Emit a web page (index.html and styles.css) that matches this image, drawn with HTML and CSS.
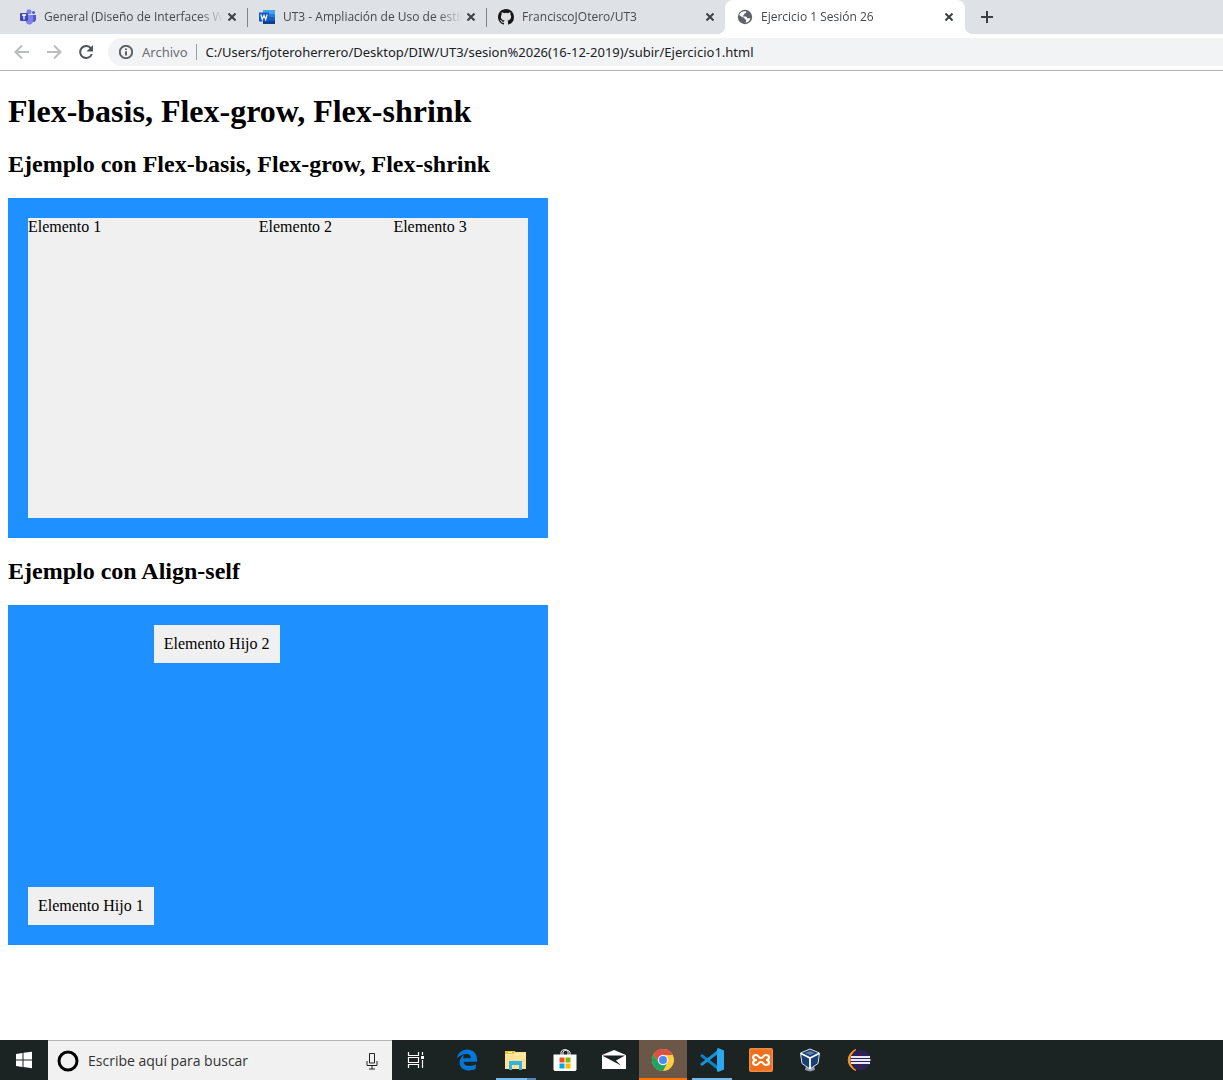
FILE: index.html
```html
<!DOCTYPE html>
<html lang="es">
<head>
<meta charset="utf-8">
<title>Ejercicio 1 Sesión 26</title>
<link rel="stylesheet" href="styles.css">
</head>
<body>
<header class="browser">
  <nav class="tabs" aria-label="Pestañas">
    <div class="tab">
      <svg class="favicon" viewBox="0 0 16 16"><circle cx="9" cy="2.700" r="2.500" fill="#7b83eb"/><circle cx="13.500" cy="3.600" r="1.500" fill="#5059c9"/><path d="M12 6h4v4.500a2.500 2.500 0 0 1-4 2z" fill="#5059c9"/><path d="M6 6h7v6a3.700 3.700 0 0 1-7 1.500z" fill="#7b83eb"/><rect y="4" width="8" height="8" rx="1" fill="#4049b5"/><path d="M2 6h4M4 6v4.500" stroke="#fff" stroke-width="1.300"/></svg>
      <a class="tab-title" href="#general">General (Diseño de Interfaces We</a>
      <button class="close" aria-label="Cerrar"><svg viewBox="0 0 8 8"><path d="M0.500 0.500l7 7M7.500 0.500l-7 7"/></svg></button>
    </div>
    <div class="tab tab-divided">
      <svg class="favicon" viewBox="0 0 16 16"><path d="M4 1h12v4H4z" fill="#41a5ee"/><path d="M4 5h12v3H4z" fill="#2b7cd3"/><path d="M4 8h12v4H4z" fill="#185abd"/><path d="M4 12h12v3H4z" fill="#103f91"/><rect y="3.500" width="10" height="9" fill="#185abd"/><path d="M1.800 5.500l1.500 5L5 6.300l1.700 4.200 1.500-5" fill="none" stroke="#fff" stroke-width="1.200"/></svg>
      <a class="tab-title" href="#ut3">UT3 - Ampliación de Uso de estil</a>
      <button class="close" aria-label="Cerrar"><svg viewBox="0 0 8 8"><path d="M0.500 0.500l7 7M7.500 0.500l-7 7"/></svg></button>
    </div>
    <div class="tab tab-divided">
      <svg class="favicon" viewBox="0 0 16 16"><path fill="#191717" d="M8 0C3.580 0 0 3.580 0 8c0 3.540 2.290 6.530 5.470 7.590.4.070.55-.17.55-.38 0-.19-.01-.82-.01-1.490-2.010.37-2.530-.49-2.690-.94-.09-.23-.48-.94-.82-1.130-.28-.15-.68-.52-.01-.53.63-.01 1.080.58 1.230.82.72 1.210 1.870.87 2.330.66.07-.52.28-.87.51-1.070-1.780-.2-3.640-.89-3.640-3.950 0-.87.31-1.590.82-2.150-.08-.2-.36-1.020.08-2.120 0 0 .67-.21 2.200.82a7.600 7.600 0 0 1 4 0c1.530-1.040 2.200-.82 2.200-.82.44 1.100.16 1.920.08 2.120.51.56.82 1.270.82 2.150 0 3.070-1.870 3.750-3.650 3.950.29.25.54.73.54 1.480 0 1.070-.01 1.930-.01 2.200 0 .21.15.46.55.38A8 8 0 0 0 16 8c0-4.420-3.580-8-8-8z"/></svg>
      <a class="tab-title" href="#github">FranciscoJOtero/UT3</a>
      <button class="close" aria-label="Cerrar"><svg viewBox="0 0 8 8"><path d="M0.500 0.500l7 7M7.500 0.500l-7 7"/></svg></button>
    </div>
    <div class="tab tab-active">
      <svg class="favicon" viewBox="0 0 16 16"><circle cx="8" cy="8" r="7.200" fill="#5f6368"/><path d="M9 2.200c1 1.300-.5 1.800-1.500 2.300-.8.500.2 1.200-.8 1.700-.8.300-1.200.8-.7 1.300h3c1 .3.700 1.700 1.700 1.700s1.800.2 2.800.3c-.8 2.300-2.500 4-5 4.200 0-1 1.200-1.500.7-2.700-.5-.8-1.700-.5-1.700-1.500 0-1-1.500-1-2.500-1.500L2.200 6C3 3.500 5.500 1.800 9 2.200z" fill="#fff"/></svg>
      <a class="tab-title" href="#ejercicio">Ejercicio 1 Sesión 26</a>
      <button class="close" aria-label="Cerrar"><svg viewBox="0 0 8 8"><path d="M0.500 0.500l7 7M7.500 0.500l-7 7"/></svg></button>
    </div>
    <button class="new-tab" aria-label="Nueva pestaña"><svg viewBox="0 0 12 12"><path d="M6 0v12M0 6h12"/></svg></button>
  </nav>
  <div class="toolbar">
    <button class="nav" aria-label="Atrás"><svg viewBox="0 0 16 16"><path d="M15 8H2M8 1.500L1.500 8 8 14.500"/></svg></button>
    <button class="nav" aria-label="Adelante"><svg viewBox="0 0 16 16"><path d="M1 8h13M8 1.500L14.500 8 8 14.500"/></svg></button>
    <button class="nav nav-reload" aria-label="Recargar"><svg viewBox="0 0 16 16"><path d="M13 4.500A6 6 0 1 0 13.800 10"/><path class="solid" d="M15 1v6.500H8.500z"/></svg></button>
    <div class="address">
      <svg class="info" viewBox="0 0 14 14"><circle cx="7" cy="7" r="6.200"/><path d="M7 6.200v4.300M7 3.500v1.500"/></svg>
      <label class="scheme" for="url">Archivo</label>
      <input class="url" id="url" type="text" value="C:/Users/fjoteroherrero/Desktop/DIW/UT3/sesion%2026(16-12-2019)/subir/Ejercicio1.html">
    </div>
  </div>
</header>
<main class="page">
  <h1>Flex-basis, Flex-grow, Flex-shrink</h1>
  <h2>Ejemplo con Flex-basis, Flex-grow, Flex-shrink</h2>
  <section class="box">
    <div class="element element-wide">Elemento 1</div>
    <div class="element">Elemento 2</div>
    <div class="element">Elemento 3</div>
  </section>
  <h2>Ejemplo con Align-self</h2>
  <section class="box">
    <div class="child child-end">Elemento Hijo 1</div>
    <div class="child child-start">Elemento Hijo 2</div>
  </section>
</main>
<footer class="taskbar">
  <button class="task" aria-label="Inicio"><svg viewBox="0 0 24 24"><path fill="#fff" d="M4 6l6.500-1v6.500H4zM11.500 4.800L20 3.700v7.800h-8.500zM4 12.500h6.500V19L4 18zM11.500 12.500H20v7.800l-8.500-1.200z"/></svg></button>
  <label class="search">
    <svg class="cortana" viewBox="0 0 24 24"><circle cx="12" cy="12" r="9" fill="none" stroke="#000" stroke-width="3"/></svg>
    <input type="text" placeholder="Escribe aquí para buscar" aria-label="Escribe aquí para buscar">
    <svg class="mic" viewBox="0 0 12 18"><path d="M3.500 1.500h5v9.500h-5zM1 9v4.500h10V9M6 13.500V17M3 17h6" fill="none" stroke="#222"/></svg>
  </label>
  <button class="task task-view" aria-label="Vista de tareas"><svg viewBox="0 0 24 24"><path d="M4.500 4v3.500h10V4M4.500 20v-3.500h10V20M4.500 9.500h10v5h-10zM18.500 4v3M18.500 12v8" fill="none" stroke="#fff" stroke-width="1.200"/><path d="M17 8h3v3h-3z" fill="#fff"/></svg></button>
  <button class="task" aria-label="Edge"><svg viewBox="0 0 24 24"><path fill="#0078d7" d="M2 10.500C2.700 5 6.500 1.500 12 1.500c6 0 10 4 10 9.500v2.700H8.500c.2 3 3 4.300 6 4.300 2.300 0 4.500-.6 6.300-1.700v4.500c-2 1-4.500 1.600-7.200 1.600-5.500 0-9-3.300-9-8.200 0-3.300 2-6 5-7.500-1 1-1.400 2.200-1.500 3.600h7.700c0-2.800-1.500-4.300-4.300-4.300C7.500 6 4.300 7.500 2 10.500z"/></svg></button>
  <button class="task task-open" aria-label="Explorador"><svg viewBox="0 0 24 24"><path d="M1 3h9l2 1h10v17H1z" fill="#ffe394"/><path d="M1 3h9v3H1z" fill="#f5bf1d"/><path d="M4 4h4v1H4z" fill="#fff"/><path d="M1 6h21v1H1z" fill="#fff0b5"/><path d="M5 13h13v9h-3v-5H8v5H5z" fill="#35b2e5"/></svg></button>
  <button class="task" aria-label="Store"><svg viewBox="0 0 24 24"><path d="M8 7V4a4 3.500 0 0 1 7-1v4M10 7V4a4 3.500 0 0 1 7 0v3" fill="none" stroke="#fff"/><path d="M.5 6.500h23v15l-1 1.500h-21l-1-1.500z" fill="#fff"/><path d="M6.500 9.500h5v5h-5z" fill="#f25022"/><path d="M12.500 9.500h5v5h-5z" fill="#7fba00"/><path d="M6.500 15.500h5v5h-5z" fill="#00a4ef"/><path d="M12.500 15.500h5v5h-5z" fill="#ffb900"/></svg></button>
  <button class="task" aria-label="Correo"><svg viewBox="0 0 24 24"><path d="M0 7l12-5 12 5v14H0z" fill="#fff"/><path d="M1 7.500h22l-9 5 5 5L1 8z" fill="#1c2222"/></svg></button>
  <button class="task task-current" aria-label="Chrome"><svg viewBox="0 0 24 24"><circle cx="12" cy="12" r="11" fill="#ffcd40"/><path d="M2.470 6.500A11 11 0 0 0 12 23l4.500-8.500H7.500z" fill="#1da462"/><path d="M12 7h9.800a11 11 0 0 0-19.300-.5l5 8z" fill="#dd5144"/><circle cx="12" cy="12" r="5.200" fill="#f1f1f1"/><circle cx="12" cy="12" r="4" fill="#4c8bf5"/></svg></button>
  <button class="task task-open task-single" aria-label="Visual Studio Code"><svg viewBox="0 0 24 24"><path d="M0 8l2-2 17 13v4z" fill="#0e82c9"/><path d="M0 16l2 2L19 5V1z" fill="#1792db"/><path d="M18 0l6 2.500v19L18 24l-1-1V1z" fill="#2aa9ee"/></svg></button>
  <button class="task" aria-label="XAMPP"><svg viewBox="0 0 24 24"><rect width="24" height="24" rx="2" fill="#f08a44"/><rect x="1.500" y="1.500" width="21" height="21" rx="1" fill="#ee6f1c"/><path d="M8 12c-5 0-5-5-1-5 3 0 2 3 5 3s2-3 5-3c4 0 4 5 0 5 4 0 4 5 0 5-3 0-2-3-5-3s-2 3-5 3c-4 0-4-5 1-5" fill="none" stroke="#fff" stroke-width="2.200"/></svg></button>
  <button class="task" aria-label="VirtualBox"><svg viewBox="0 0 24 24"><path d="M8 18l-1 4 5 1.500 5-1.500-1-4z" fill="#8d9bab"/><path d="M12 1l9.500 4-1.500 10.500L12 21l-8-5.500L2.500 5z" fill="#183f73" stroke="#dce5ee"/><path d="M3 5.500L12 10l9-4.500M12 10v11" fill="none" stroke="#fff" stroke-width="1.800"/><path d="M7 5l5-2 5 2-5 2z" fill="#5f7fa5"/></svg></button>
  <button class="task" aria-label="Eclipse"><svg viewBox="0 0 24 24"><path d="M9 1.500a11 11 0 0 0 0 21C2 17 2 7 9 1.500z" fill="#f7941e" stroke="#f7941e"/><circle cx="13.500" cy="12" r="10.300" fill="#2c2255"/><path d="M4 9h19M3.500 12h20M4 15h19" stroke="#e9e7f3" stroke-width="1.800"/></svg></button>
</footer>
</body>
</html>
```

FILE: styles.css
```css
* { box-sizing: border-box; }

body {
  margin: 0;
  min-height: 100vh;
  display: flex;
  flex-direction: column;
  background: #fff;
  color: #000;
  font-family: "Liberation Serif", "Times New Roman", serif;
  font-size: 16px;
}

button {
  flex: none;
  display: flex;
  align-items: center;
  justify-content: center;
  padding: 0;
  border: 0;
  background: none;
}

input {
  min-width: 0;
  padding: 0;
  border: 0;
  outline: 0;
  background: none;
  font: inherit;
}

svg { flex: none; }

/* Browser chrome */
.browser {
  border-bottom: 1px solid #b3b3b3;
  font-family: "Open Sans", "Noto Sans", sans-serif;
}

.tabs {
  display: flex;
  height: 34px;
  padding-left: 8px;
  background: #dee1e6;
}

.tab {
  position: relative;
  display: flex;
  align-items: center;
  flex: 0 1 239px;
  min-width: 0;
  padding: 0 10px 0 12px;
}

.tab-divided::before {
  content: "";
  position: absolute;
  left: 0;
  top: 8px;
  width: 1px;
  height: 19px;
  background: #808387;
}

.favicon {
  width: 16px;
  height: 16px;
}

.tab-title {
  flex: 1;
  min-width: 0;
  margin: 0 0 0 8px;
  overflow: hidden;
  color: #45494d;
  font-size: 12px;
  line-height: 16px;
  white-space: nowrap;
  text-decoration: none;
  mask-image: linear-gradient(to left, transparent 4px, #000 28px);
}

.close {
  width: 10px;
  height: 16px;
}

.close svg {
  width: 8px;
  height: 8px;
  stroke: #3c4043;
  stroke-width: 2;
}

.tab-active {
  flex-basis: 240px;
  padding-right: 11px;
  border-radius: 8px 8px 0 0;
  background: #fff;
}

.tab-active::before,
.tab-active::after {
  content: "";
  position: absolute;
  bottom: 0;
  width: 8px;
  height: 8px;
}

.tab-active::before {
  right: 100%;
  background: radial-gradient(circle at 0 0, #dee1e6 8px, #fff 8px);
}

.tab-active::after {
  left: 100%;
  background: radial-gradient(circle at 100% 0, #dee1e6 8px, #fff 8px);
}

.new-tab {
  width: 28px;
  margin-left: 8px;
}

.new-tab svg {
  width: 12px;
  height: 12px;
  stroke: #3c4043;
  stroke-width: 2;
}

.toolbar {
  display: flex;
  align-items: center;
  height: 36px;
  padding-left: 6px;
}

.nav {
  width: 32px;
  height: 28px;
}

.nav svg {
  width: 16px;
  height: 16px;
  fill: none;
  stroke: #babcbe;
  stroke-width: 2;
}

.nav-reload svg { stroke: #505458; }

.nav-reload .solid {
  fill: #505458;
  stroke: none;
}

.address {
  display: flex;
  align-items: center;
  flex: 1;
  height: 28px;
  margin-left: 6px;
  padding-left: 11px;
  border-radius: 14px 0 0 14px;
  background: #f1f3f4;
  font-family: "Noto Sans", "Open Sans", sans-serif;
  font-size: 13px;
}

.info {
  width: 14px;
  height: 14px;
  fill: none;
  stroke: #5f6368;
  stroke-width: 2;
}

.scheme {
  margin-left: 9px;
  padding-right: 8px;
  border-right: 1px solid #9a9da1;
  color: #6b6f74;
  line-height: 16px;
}

.url {
  flex: 1;
  margin-left: 9px;
  color: #202124;
}

/* Exercise page */
.page {
  flex: 1;
  padding: 0 8px;
}

h1 {
  margin: 22px 0 21px;
  font-size: 32px;
  line-height: 37px;
}

h2 {
  margin: 20px 0;
  font-size: 24px;
  line-height: 27px;
}

.box {
  display: flex;
  width: 540px;
  max-width: 100%;
  height: 340px;
  padding: 20px;
  background: #1e90ff;
}

.element {
  flex: 7 1 0;
  background: #f0f0f0;
}

.element-wide { flex-grow: 12; }

.child {
  padding: 10px;
  background: #f0f0f0;
}

.child-end { align-self: flex-end; }

.child-start { align-self: flex-start; }

/* Windows taskbar */
.taskbar {
  display: flex;
  gap: 1px;
  height: 40px;
  background: #1c2323;
  font-family: "Open Sans", "Noto Sans", sans-serif;
}

.search {
  display: flex;
  align-items: center;
  flex: 0 1 344px;
  margin: 0 -1px;
  padding: 0 14px 0 8px;
  border-top: 1px solid #b5b5b5;
  background: #f1f1f1;
}

.cortana {
  width: 24px;
  height: 24px;
}

.search input {
  flex: 1;
  margin-left: 8px;
  font-size: 14px;
}

.search input::placeholder {
  color: #333;
  opacity: 1;
}

.mic {
  width: 12px;
  height: 18px;
}

.task {
  width: 48px;
  border: solid transparent;
  border-width: 2px 0;
}

.task svg {
  width: 24px;
  height: 24px;
}

.task-view { margin-right: 2px; }

.task-open {
  background: linear-gradient(to right, #76b9ed 31px, #5787b0 31px) 4px 100% / 40px 2px no-repeat border-box;
}

.task-single {
  background: linear-gradient(#76b9ed, #76b9ed) 4px 100% / 40px 2px no-repeat border-box;
}

.task-current {
  border-bottom-color: #ff7300;
  background: #6b5748;
}
```
